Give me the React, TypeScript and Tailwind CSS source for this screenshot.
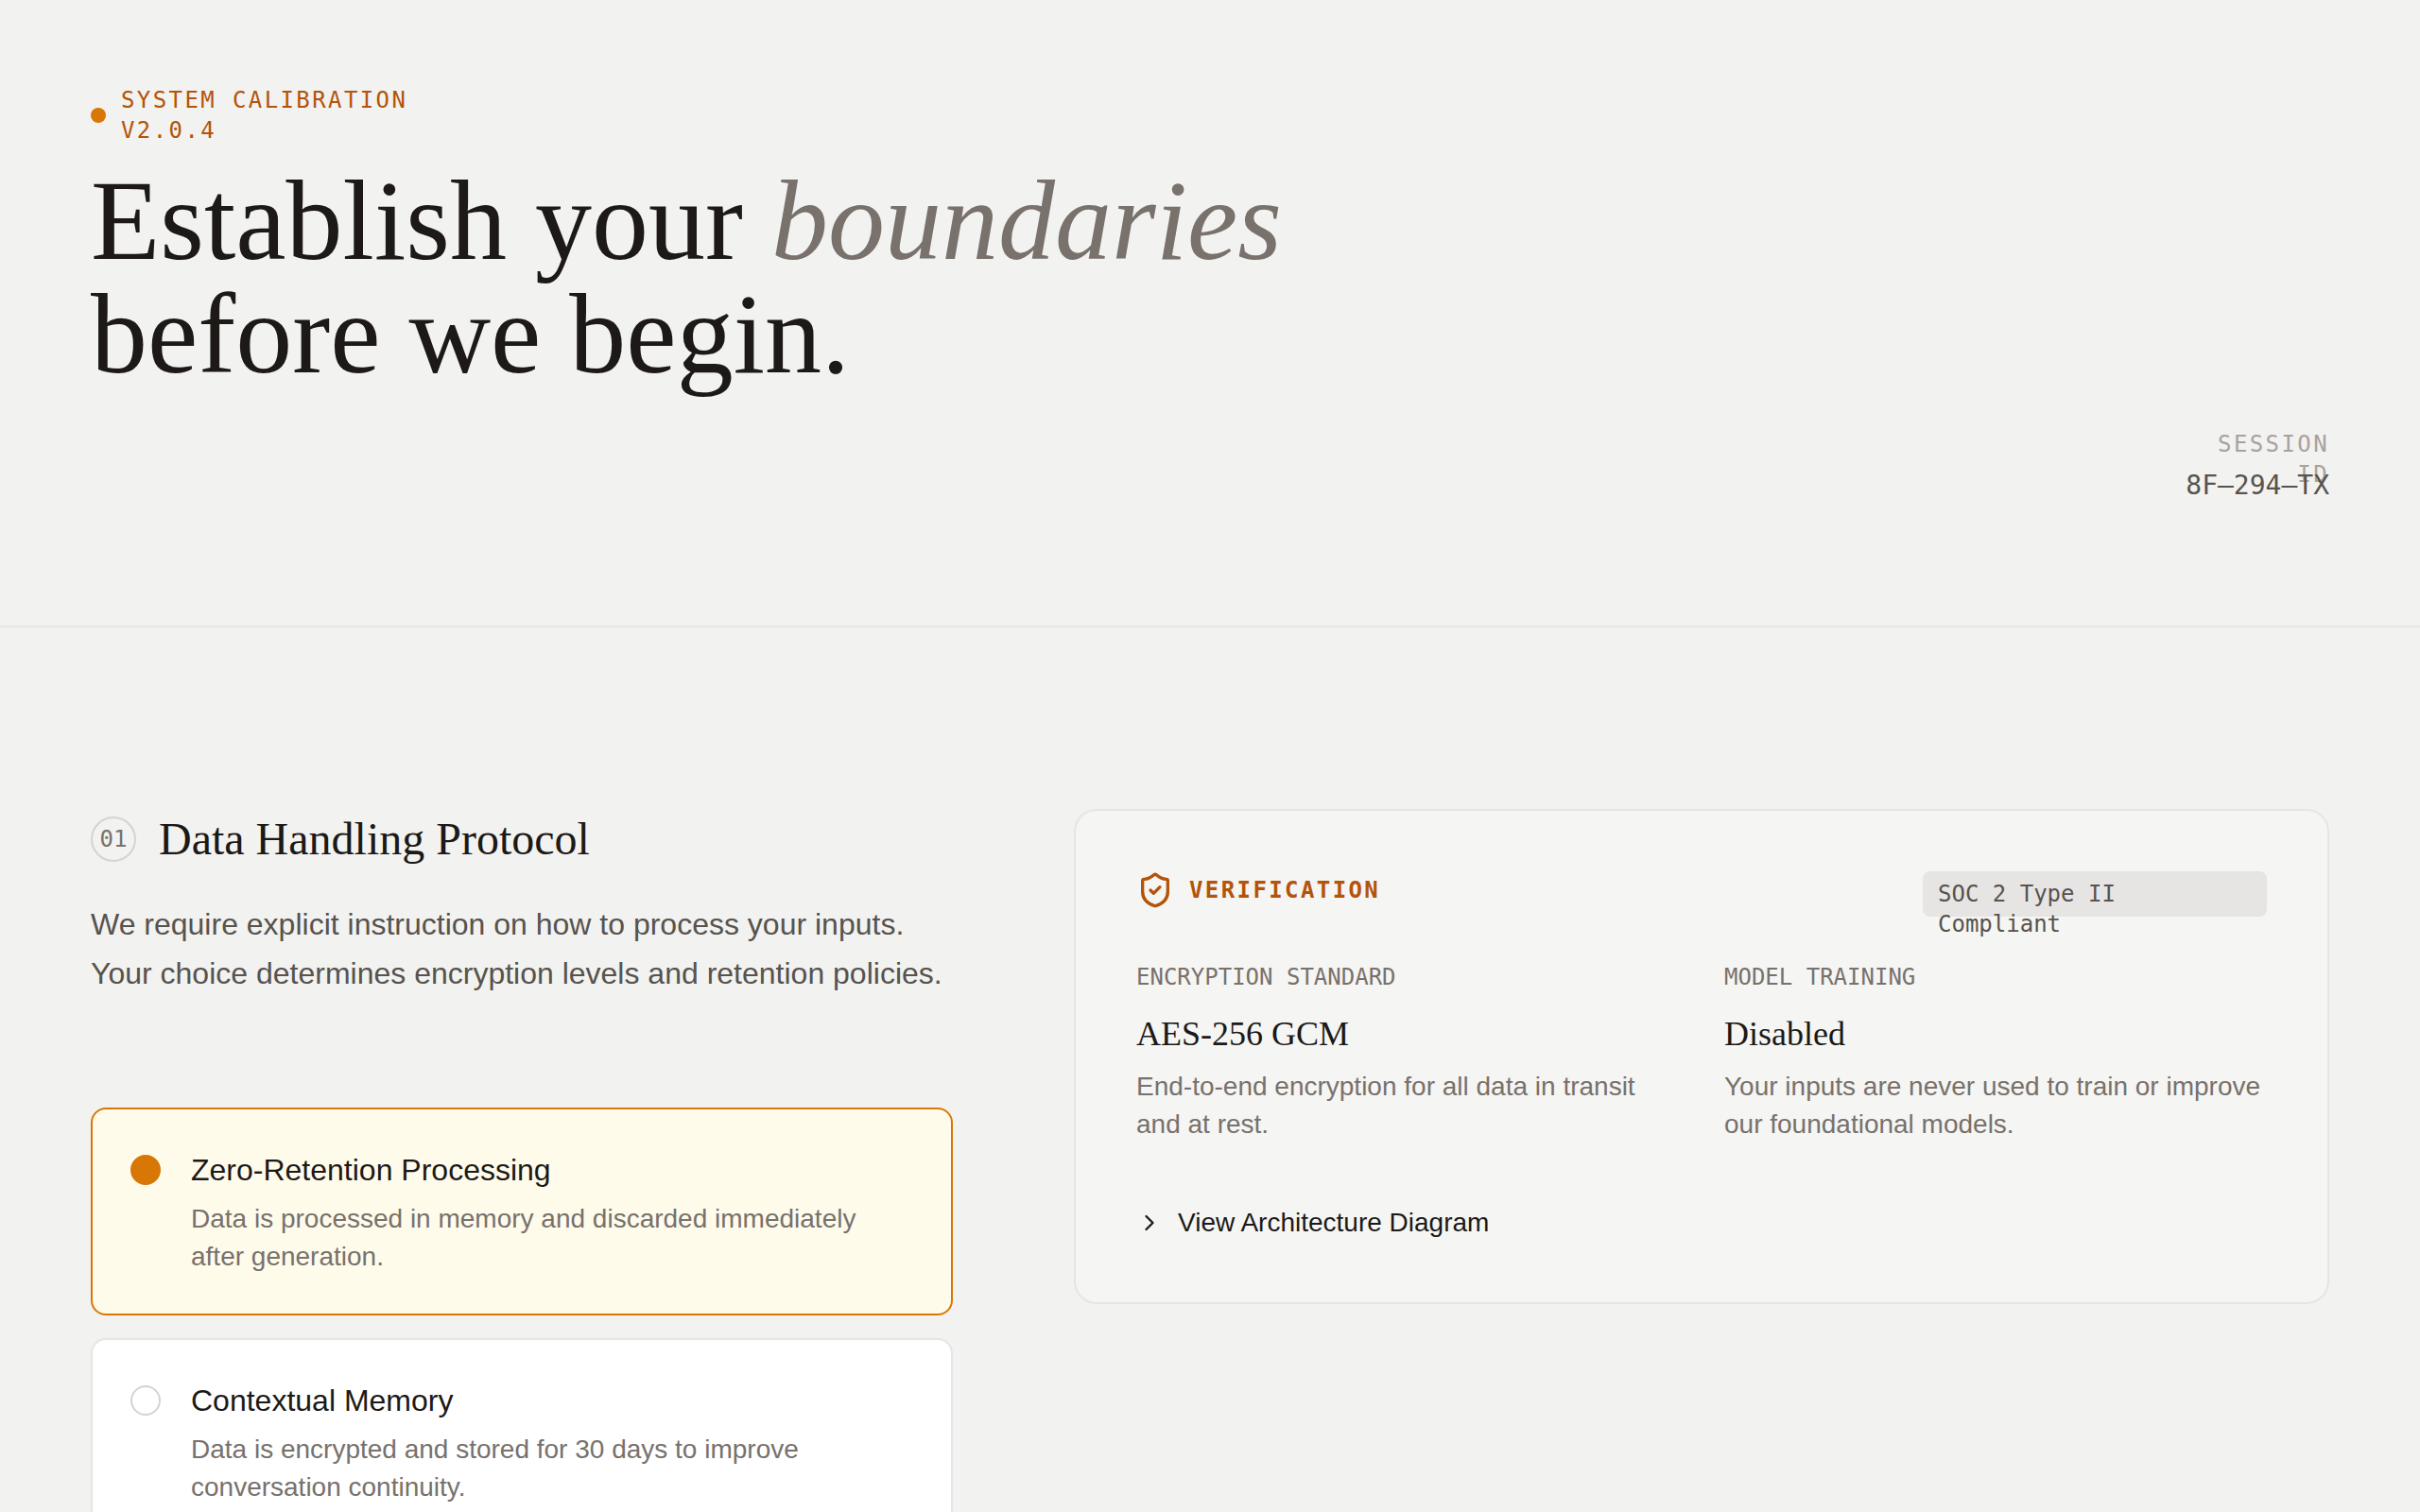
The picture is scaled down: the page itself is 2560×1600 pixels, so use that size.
import { useState } from 'react';
import { ChevronRight, ShieldCheck } from 'lucide-react';

interface RetentionOption {
  id: string;
  title: string;
  description: string;
}

const options: RetentionOption[] = [
  {
    id: 'zero-retention',
    title: 'Zero-Retention Processing',
    description: 'Data is processed in memory and discarded immediately after generation.',
  },
  {
    id: 'contextual-memory',
    title: 'Contextual Memory',
    description: 'Data is encrypted and stored for 30 days to improve conversation continuity.',
  },
];

const facts = [
  {
    label: 'Encryption Standard',
    value: 'AES-256 GCM',
    note: 'End-to-end encryption for all data in transit and at rest.',
  },
  {
    label: 'Model Training',
    value: 'Disabled',
    note: 'Your inputs are never used to train or improve our foundational models.',
  },
];

const serif = "font-['Liberation_Serif',serif]";
const mono = "font-['DejaVu_Sans_Mono',monospace]";

function Header() {
  return (
    <header className="border-b-2 border-[#e5e5e3] px-24 pt-[90px] pb-32">
      <div className={`${mono} flex items-center gap-4 text-2xl/8 tracking-widest text-[#b45309] uppercase`}>
        <span className="size-4 shrink-0 rounded-full bg-[#d97706]" />
        <p>
          System Calibration
          <br />
          v2.0.4
        </p>
      </div>
      <h1 className={`${serif} mt-5 text-[120px] leading-none text-[#1c1917]`}>
        Establish your <em className="text-[#78716c]">boundaries</em>
        <br />
        before we begin.
      </h1>
      <div className={`${mono} mt-10 ml-auto w-[152px] text-right`}>
        {/* the label wraps and runs on under the id */}
        <p className="h-10 text-2xl/8 tracking-widest text-[#a8a29e] uppercase">Session ID</p>
        <p className="relative text-[28px]/10 whitespace-nowrap text-[#57534e]">8F–294–TX</p>
      </div>
    </header>
  );
}

function OptionCard({
  option,
  checked,
  onSelect,
}: {
  option: RetentionOption;
  checked: boolean;
  onSelect: () => void;
}) {
  return (
    <label
      htmlFor={option.id}
      className={`flex cursor-pointer gap-8 rounded-2xl border-2 p-10 ${
        checked ? 'border-[#d97706] bg-[#fffbeb]' : 'border-[#e7e5e4] bg-white'
      }`}
    >
      <input
        id={option.id}
        type="radio"
        name="retention"
        checked={checked}
        onChange={onSelect}
        className="mt-2 size-8 shrink-0 appearance-none rounded-full border-2 border-[#d6d3d1] checked:border-[#d97706] checked:bg-[#d97706]"
      />
      <span>
        <span className="block text-[32px]/12 text-[#1c1917]">{option.title}</span>
        <span className="mt-2 block text-[28px]/10 text-[#78716c]">{option.description}</span>
      </span>
    </label>
  );
}

function VerificationPanel() {
  return (
    <aside className="col-span-7 self-start rounded-3xl border-2 border-[#e5e5e3] bg-[#f5f5f3] p-16">
      <div className="flex items-start justify-between">
        <div className="flex items-center gap-4 text-[#b45309]">
          <ShieldCheck className="size-10" />
          <h3 className={`${mono} text-2xl/8 font-bold tracking-widest uppercase`}>Verification</h3>
        </div>
        <p className={`${mono} h-12 w-[364px] rounded-lg bg-[#e7e5e4] px-4 py-2 text-2xl/8 text-[#57534e]`}>
          SOC 2 Type II
          <br />
          Compliant
        </p>
      </div>
      <dl className="mt-12 grid grid-cols-2 gap-12">
        {facts.map((fact) => (
          <div key={fact.label}>
            <dt className={`${mono} text-2xl/8 text-[#78716c] uppercase`}>{fact.label}</dt>
            <dd>
              <p className={`${serif} mt-4 text-4xl/14 text-[#1c1917]`}>{fact.value}</p>
              <p className="mt-2 text-[28px]/10 text-[#78716c]">{fact.note}</p>
            </dd>
          </div>
        ))}
      </dl>
      <button type="button" className="mt-16 flex items-center gap-4 text-[28px]/10 text-[#1c1917]">
        <ChevronRight className="size-7" />
        View Architecture Diagram
      </button>
    </aside>
  );
}

export default function App() {
  const [selected, setSelected] = useState('zero-retention');

  return (
    <div className="min-h-screen bg-[#f2f2f0] font-['Liberation_Sans',sans-serif]">
      <Header />
      <main className="grid grid-cols-12 gap-x-32 px-24 pt-48">
        <section className="col-span-5">
          <div className="flex items-center gap-6">
            <span
              className={`${mono} flex size-12 items-center justify-center rounded-full border-2 border-[#d6d3d1] text-2xl/8 text-[#78716c]`}
            >
              01
            </span>
            <h2 className={`${serif} text-5xl/16 text-[#1c1917]`}>Data Handling Protocol</h2>
          </div>
          <p className="mt-8 text-[32px]/13 text-[#57534e]">
            We require explicit instruction on how to process your inputs. Your choice determines encryption levels and
            retention policies.
          </p>
          <div className="mt-[116px] flex flex-col gap-6" role="radiogroup" aria-label="Data handling">
            {options.map((option) => (
              <OptionCard
                key={option.id}
                option={option}
                checked={selected === option.id}
                onSelect={() => setSelected(option.id)}
              />
            ))}
          </div>
        </section>
        <VerificationPanel />
      </main>
    </div>
  );
}
